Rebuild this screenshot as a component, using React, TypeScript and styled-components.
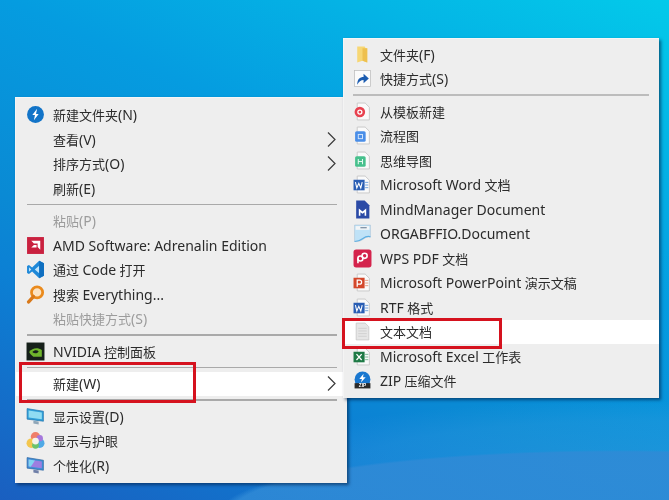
import React from "react";
import styled, { createGlobalStyle } from "styled-components";

const GlobalStyle = createGlobalStyle`
  html, body {
    margin: 0;
    padding: 0;
    background: #0f86d6;
  }
`;

const Desktop = styled.div`
  position: relative;
  width: 669px;
  height: 500px;
  overflow: hidden;
  font-family: "Noto Sans", "Noto Sans CJK SC", sans-serif;
  filter: blur(0.3px);
  background:
    radial-gradient(ellipse 400px 62px at 620px 512px, rgba(48, 138, 214, 0.85) 97%, transparent 100%),
    radial-gradient(ellipse 420px 70px at 640px 470px, rgba(60, 160, 225, 0.4) 0%, rgba(60, 160, 225, 0.25) 70%, transparent 100%),
    linear-gradient(205deg, #03caea 0%, #059ce0 38%, #0a8ad4 62%, #0c80d4 72%, #1a5fc0 100%);
`;

const Menu = styled.div<{ $left: number; $top: number; $width: number; $padTop: number; $padBottom: number }>`
  position: absolute;
  left: ${({ $left }) => $left}px;
  top: ${({ $top }) => $top}px;
  width: ${({ $width }) => $width}px;
  box-sizing: border-box;
  padding: ${({ $padTop }) => $padTop}px 0 ${({ $padBottom }) => $padBottom}px;
  background: #eeeeee;
  border-top: 1px solid #f6f6f6;
  border-left: 1px solid #f4f4f4;
  box-shadow: 2px 2px 3px rgba(0, 30, 70, 0.6);
`;

const Row = styled.div<{ $disabled?: boolean; $active?: boolean; $indent: number }>`
  display: flex;
  align-items: center;
  height: 24.5px;
  padding-left: ${({ $indent }) => $indent}px;
  padding-right: 11px;
  font-size: 13px;
  white-space: nowrap;
  color: ${({ $disabled }) => ($disabled ? "#9c9c9c" : "#2b2b2b")};
  background: ${({ $active }) => ($active ? "#ffffff" : "transparent")};
`;

const IconSlot = styled.span<{ $width: number }>`
  display: flex;
  align-items: center;
  flex: 0 0 ${({ $width }) => $width}px;
  height: 100%;
`;

const Label = styled.span`
  flex: 1;
`;

const Latin = styled.span`
  font-size: 14px;
`;

const Separator = styled.div<{ $inset: number; $right: number; $color: string }>`
  display: flex;
  align-items: center;
  height: 8px;
  padding: 0 ${({ $right }) => $right}px 0 ${({ $inset }) => $inset}px;

  &::before {
    content: "";
    flex: 1;
    height: 1.5px;
    background: ${({ $color }) => $color};
  }
`;

const Callout = styled.div<{ $left: number; $top: number; $width: number; $height: number }>`
  position: absolute;
  left: ${({ $left }) => $left}px;
  top: ${({ $top }) => $top}px;
  width: ${({ $width }) => $width}px;
  height: ${({ $height }) => $height}px;
  box-sizing: border-box;
  border: 3px solid #d5121e;
`;

const Glyph = styled.svg`
  display: block;
  width: 19px;
  height: 19px;
  margin-left: -0.5px;
`;

const Icon = ({ children }: { children: React.ReactNode }) => (
  <Glyph viewBox="0 0 18 18">{children}</Glyph>
);

// page outline used by the document type icons
const Page = () => (
  <path d="M4 1h7.500L15.500 5v12H4z" fill="#fafafa" stroke="#c4c4c4" strokeWidth="0.800" />
);

const Chevron = () => (
  <svg width="9" height="15" viewBox="0 0 9 15" fill="none">
    <path d="M1 0.500l7 7-7 7" stroke="#3a3a3a" strokeWidth="1.200" />
  </svg>
);

const icons: Record<string, React.ReactNode> = {
  bolt: (
    <Icon>
      <circle cx="9" cy="9" r="8" fill="#1274c8" />
      <path d="M10.500 3.500L6 9.500h2.500L7.500 14.500l4.500-6H9.500z" fill="#fff" />
    </Icon>
  ),
  amd: (
    <Icon>
      <rect x="1" y="1" width="16" height="16" fill="#c9213f" />
      <path d="M5 4.500h8.500V13l-2.500-2.500V7H7.500zM7.500 8.500H10V11H5z" fill="#fff" />
    </Icon>
  ),
  code: (
    <Icon>
      <path d="M12.500 0.800L17 3v12l-4.500 2.200L5.800 11l-3 2.300L1 12.200V5.800l1.800-1.100 3 2.300z" fill="#1e88d8" />
      <path d="M12.500 5.500L8.300 9l4.200 3.500zM2.800 6.800V11.200L5 9z" fill="#bfe3fa" />
      <path d="M12.500 0.800L17 3v12l-4.500 2.200z" fill="#0f6fc0" />
    </Icon>
  ),
  everything: (
    <Icon>
      <circle cx="10.500" cy="7" r="5.300" fill="#fbe3c4" stroke="#ea8a1c" strokeWidth="2.600" />
      <path d="M7 11l-4.500 5" stroke="#d9791a" strokeWidth="3.200" strokeLinecap="round" />
    </Icon>
  ),
  nvidia: (
    <Icon>
      <rect x="0.500" y="0.500" width="17" height="17" fill="#16201a" />
      <path d="M3 9.500C6 5.500 11 5 15 7.500v6.500H7C5.500 13 4 11.500 3 9.500z" fill="#6fb52c" />
      <path d="M6 9.500c2-2 4.500-2 6-0.500-1.500 2-4 2.500-6 0.500z" fill="#16201a" />
    </Icon>
  ),
  display: (
    <Icon>
      <path d="M1 1.500l15.500 2.500v9.500L1 11.500z" fill="#2f9fd8" stroke="#1f6fa8" strokeWidth="0.600" />
      <path d="M2.500 3.200l12.500 2v6.500L2.500 10z" fill="#8fdcf2" />
      <path d="M7 13l5 0.700v2.800l-5-0.800z" fill="#8fa6b8" />
    </Icon>
  ),
  eye: (
    <Icon>
      <circle cx="9" cy="5.500" r="4.500" fill="#ef7f6a" />
      <circle cx="5" cy="11.500" r="4.500" fill="#f3c64e" />
      <circle cx="13" cy="11.500" r="4.500" fill="#4fa9e6" />
      <circle cx="13" cy="6.800" r="3" fill="#a678dc" />
      <circle cx="9" cy="13.500" r="3.200" fill="#6cc46a" />
      <circle cx="9" cy="9.500" r="3.200" fill="#f6f3ea" />
    </Icon>
  ),
  personalize: (
    <Icon>
      <path d="M1 1.500l15.500 2.500v9.500L1 11.500z" fill="#3f8fd6" stroke="#2b5f9c" strokeWidth="0.600" />
      <path d="M2.500 3.200l12.500 2v6.500L2.500 10z" fill="#9d7fe0" />
      <path d="M2.500 3.200l6 1-4 5.900-2-0.300z" fill="#7fd6f2" />
      <path d="M7 13l5 0.700v2.800l-5-0.800z" fill="#6f7fa8" />
    </Icon>
  ),
  folder: (
    <Icon>
      <path d="M4 1.500h7l1 1.500h1.500V16.500L9 15 4 16.500z" fill="#f7d774" />
      <path d="M9 3h4.500V16.500L9 15z" fill="#eec04e" />
    </Icon>
  ),
  shortcut: (
    <Icon>
      <rect x="1.500" y="1.500" width="15" height="15" fill="#fbfbfb" stroke="#bdbdbd" strokeWidth="0.700" />
      <path d="M4 15c0-5.500 2.500-7.500 6-7.500V4.500l5 4.500-5 4.500v-3c-2.500 0-4.500 1.500-6 4.500z" fill="#1c5cb0" />
    </Icon>
  ),
  template: (
    <Icon>
      <Page />
      <circle cx="6.500" cy="9.500" r="5" fill="#e8414f" />
      <circle cx="6.500" cy="9.500" r="1.900" fill="none" stroke="#fff" strokeWidth="1.200" />
    </Icon>
  ),
  flow: (
    <Icon>
      <Page />
      <rect x="2" y="5" width="10" height="10" rx="1.500" fill="#4a8ee8" />
      <rect x="5" y="8" width="4" height="4" fill="none" stroke="#d5e6fb" strokeWidth="0.900" />
    </Icon>
  ),
  mind: (
    <Icon>
      <Page />
      <rect x="2" y="5" width="10" height="10" rx="1.500" fill="#46c08c" />
      <path d="M5 7.500v5M9 7.500v5M5 10h4" stroke="#e3f8ee" strokeWidth="1" />
    </Icon>
  ),
  word: (
    <Icon>
      <Page />
      <path d="M11.500 7h3M11.500 9.500h3M11.500 12h3" stroke="#6ea0dc" strokeWidth="0.900" />
      <rect x="0.500" y="4.500" width="10.500" height="10" fill="#2a5eb4" />
      <path d="M2.300 6.800l1.300 5.500 1.900-4.500 1.900 4.500 1.300-5.500" fill="none" stroke="#fff" strokeWidth="1" />
    </Icon>
  ),
  mindmanager: (
    <Icon>
      <path d="M3 0.500h8l4.500 4.500v12.500H3z" fill="#2b4aa6" />
      <path d="M5.500 15V8L9 11l3.500-3v7H11v-3.500l-2 1.600-2-1.600V15z" fill="#fff" />
    </Icon>
  ),
  orga: (
    <Icon>
      <path d="M1.500 1h15v11.500c-3-1-5 0.500-7 2s-5 2.500-8 2z" fill="#bfe2f7" stroke="#a3bdd2" strokeWidth="0.500" />
      <path d="M2.500 2h13v3.500h-13z" fill="#f3f5f7" />
      <path d="M7 3.500h6" stroke="#7c8fa3" strokeWidth="1.200" />
      <path d="M1.500 16.500c3 0 5.500-1 7.500-2.500s4-3 7.500-2" fill="none" stroke="#5daee2" strokeWidth="1" />
    </Icon>
  ),
  wps: (
    <Icon>
      <rect x="0.500" y="0.500" width="17" height="17" rx="2.500" fill="#d4234c" />
      <circle cx="11" cy="6.500" r="2.400" fill="none" stroke="#fff" strokeWidth="1.500" />
      <circle cx="7" cy="9" r="2.400" fill="none" stroke="#fff" strokeWidth="1.500" />
      <path d="M4.700 9v4.500" stroke="#fff" strokeWidth="1.500" />
    </Icon>
  ),
  powerpoint: (
    <Icon>
      <Page />
      <path d="M11.500 7h3M11.500 9.500h3M11.500 12h3" stroke="#e39a80" strokeWidth="0.900" />
      <rect x="0.500" y="4.500" width="10.500" height="10" fill="#d4472a" />
      <path d="M4 13V6.800h2.300a1.800 1.800 0 0 1 0 3.700H4" fill="none" stroke="#fff" strokeWidth="1.200" />
    </Icon>
  ),
  text: (
    <Icon>
      <path d="M3 1h8.500L15 4.500V17H3z" fill="#e6e6e6" stroke="#c4c4c4" strokeWidth="0.700" />
      <path d="M5 6h8M5 8.500h8M5 11h8M5 13.500h8" stroke="#cdcdcd" strokeWidth="0.800" />
    </Icon>
  ),
  excel: (
    <Icon>
      <Page />
      <path d="M11.500 7h3M11.500 9.500h3M11.500 12h3" stroke="#79b892" strokeWidth="0.900" />
      <rect x="0.500" y="4.500" width="10.500" height="10" fill="#1e7a45" />
      <path d="M3.300 6.800l4.900 5.500M8.200 6.800l-4.900 5.500" stroke="#fff" strokeWidth="1.200" />
    </Icon>
  ),
  zip: (
    <Icon>
      <circle cx="9" cy="8" r="7.500" fill="#1a78d0" />
      <path d="M10 2.500L6 7.500h2.500L7.500 11l4.500-5H9.500z" fill="#fff" />
      <path d="M1.500 11.500h15v5h-15z" fill="#2b2b2b" />
      <text x="9" y="15.500" textAnchor="middle" fontSize="4.500" fontWeight="700" fill="#fff" fontFamily="Liberation Sans, sans-serif">ZIP</text>
    </Icon>
  ),
};

type Item =
  | "sep"
  | { label: React.ReactNode; icon?: string; disabled?: boolean; active?: boolean; more?: boolean };

const desktopMenu: Item[] = [
  { label: <>新建文件夹<Latin>(N)</Latin></>, icon: "bolt" },
  { label: <>查看<Latin>(V)</Latin></>, more: true },
  { label: <>排序方式<Latin>(O)</Latin></>, more: true },
  { label: <>刷新<Latin>(E)</Latin></> },
  "sep",
  { label: <>粘贴<Latin>(P)</Latin></>, disabled: true },
  { label: <Latin>AMD Software: Adrenalin Edition</Latin>, icon: "amd" },
  { label: <>通过 <Latin>Code</Latin> 打开</>, icon: "code" },
  { label: <>搜索 <Latin>Everything...</Latin></>, icon: "everything" },
  { label: <>粘贴快捷方式<Latin>(S)</Latin></>, disabled: true },
  "sep",
  { label: <><Latin>NVIDIA</Latin> 控制面板</>, icon: "nvidia" },
  "sep",
  { label: <>新建<Latin>(W)</Latin></>, active: true, more: true },
  "sep",
  { label: <>显示设置<Latin>(D)</Latin></>, icon: "display" },
  { label: "显示与护眼", icon: "eye" },
  { label: <>个性化<Latin>(R)</Latin></>, icon: "personalize" },
];

const newMenu: Item[] = [
  { label: <>文件夹<Latin>(F)</Latin></>, icon: "folder" },
  { label: <>快捷方式<Latin>(S)</Latin></>, icon: "shortcut" },
  "sep",
  { label: "从模板新建", icon: "template" },
  { label: "流程图", icon: "flow" },
  { label: "思维导图", icon: "mind" },
  { label: <><Latin>Microsoft Word</Latin> 文档</>, icon: "word" },
  { label: <Latin>MindManager Document</Latin>, icon: "mindmanager" },
  { label: <Latin>ORGABFFIO.Document</Latin>, icon: "orga" },
  { label: <><Latin>WPS PDF</Latin> 文档</>, icon: "wps" },
  { label: <><Latin>Microsoft PowerPoint</Latin> 演示文稿</>, icon: "powerpoint" },
  { label: <><Latin>RTF</Latin> 格式</>, icon: "word" },
  { label: "文本文档", icon: "text", active: true },
  { label: <><Latin>Microsoft Excel</Latin> 工作表</>, icon: "excel" },
  { label: <><Latin>ZIP</Latin> 压缩文件</>, icon: "zip" },
];

const MenuItems = ({
  items,
  indent,
  iconWidth,
  sepInset,
  sepRight,
  sepColor,
}: {
  items: Item[];
  indent: number;
  iconWidth: number;
  sepInset: number;
  sepRight: number;
  sepColor: string;
}) => (
  <>
    {items.map((item, i) =>
      item === "sep" ? (
        <Separator key={i} $inset={sepInset} $right={sepRight} $color={sepColor} />
      ) : (
        <Row key={i} $indent={indent} $disabled={item.disabled} $active={item.active}>
          <IconSlot $width={iconWidth}>{item.icon && icons[item.icon]}</IconSlot>
          <Label>{item.label}</Label>
          {item.more && <Chevron />}
        </Row>
      )
    )}
  </>
);

const App = () => (
  <Desktop>
    <GlobalStyle />
    <Menu $left={15} $top={97} $width={332} $padTop={4.5} $padBottom={5.5}>
      <MenuItems items={desktopMenu} indent={10} iconWidth={27} sepInset={11} sepRight={10} sepColor="#a9a9a9" />
    </Menu>
    <Menu $left={343} $top={38} $width={316} $padTop={3} $padBottom={5}>
      <MenuItems items={newMenu} indent={9} iconWidth={27} sepInset={9} sepRight={10} sepColor="#bcbcbc" />
    </Menu>
    <Callout $left={19} $top={362} $width={177} $height={41} />
    <Callout $left={342} $top={318} $width={160} $height={31} />
  </Desktop>
);

export default App;
